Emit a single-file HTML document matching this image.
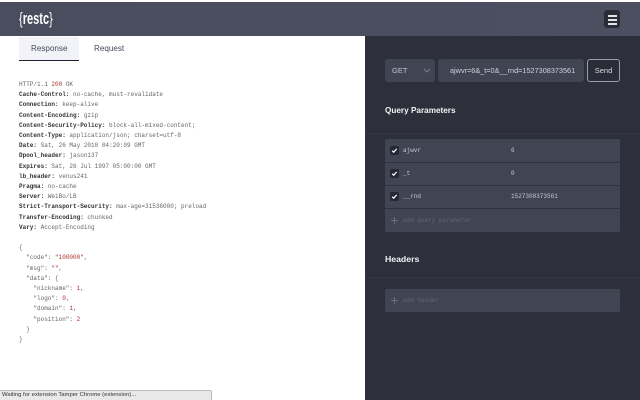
<!DOCTYPE html>
<html><head><meta charset="utf-8">
<style>
html,body{margin:0;padding:0;width:640px;height:400px;overflow:hidden;background:#fff}
body{position:relative;font-family:"Liberation Sans",sans-serif}
.a{position:absolute;white-space:pre}
.m{font-family:"Liberation Mono",monospace}
#hdr{left:0;top:2px;width:640px;height:34px;background:linear-gradient(90deg,#494d5e,#4b4f60)}
#side{left:365px;top:36px;width:275px;height:364px;background:#2d2f3b}
#code{left:19px;top:80px;font-size:6px;line-height:10.2px;color:#666}
#code b{color:#333;font-weight:bold}
#code i{font-style:normal;color:#a33}
.box{background:#414553}
.sep{background:#2f323e;height:1px;left:385px;width:235px}
.cb{width:9px;height:9px;background:#262833;border-radius:2px;left:390px}
.v{font-size:6px;color:#c5c8d0;line-height:10px}
.h{font-weight:bold;color:#f2f2f4;line-height:12px}
</style></head><body>
<div class="a" id="hdr"></div>
<div class="a" style="left:19px;top:8px;font-size:17px;line-height:22px;color:#fff;font-weight:bold;transform-origin:0 50%;transform:scaleX(.65)"><span style="font-weight:normal">{</span>restc<span style="font-weight:normal">}</span></div>
<div class="a" style="left:604px;top:10px;width:16px;height:18px;background:#2a2c37;border-radius:3px"></div>
<div class="a" style="left:608px;top:15px;width:9px;height:1.6px;background:#e4e4e8"></div>
<div class="a" style="left:608px;top:19px;width:9px;height:1.6px;background:#e4e4e8"></div>
<div class="a" style="left:608px;top:23px;width:9px;height:1.6px;background:#e4e4e8"></div>

<div class="a" style="left:19px;top:37px;width:60px;height:23px;background:#f2f3f8"></div>
<div class="a" style="left:19px;top:60px;width:60px;height:1px;background:#1f2130"></div>
<div class="a" style="left:0;top:60px;width:365px;height:1px;background:#eceef2;z-index:-1"></div>
<div class="a" style="left:31px;top:43px;font-size:8.1px;line-height:12px;color:#444a5c">Response</div>
<div class="a" style="left:94px;top:43px;font-size:8.1px;line-height:12px;color:#444a5c">Request</div>

<div class="a m" id="code">HTTP/1.1 <i>200</i> OK
<b>Cache-Control:</b> no-cache, must-revalidate
<b>Connection:</b> keep-alive
<b>Content-Encoding:</b> gzip
<b>Content-Security-Policy:</b> block-all-mixed-content;
<b>Content-Type:</b> application/json; charset=utf-8
<b>Date:</b> Sat, 26 May 2018 04:20:09 GMT
<b>Dpool_header:</b> jason137
<b>Expires:</b> Sat, 26 Jul 1997 05:00:00 GMT
<b>lb_header:</b> venus241
<b>Pragma:</b> no-cache
<b>Server:</b> WeiBo/LB
<b>Strict-Transport-Security:</b> max-age=31536000; preload
<b>Transfer-Encoding:</b> chunked
<b>Vary:</b> Accept-Encoding

{
  "code": <i>"100000"</i>,
  "msg": <i>""</i>,
  "data": {
    "nickname": <i>1</i>,
    "logo": <i>0</i>,
    "domain": <i>1</i>,
    "position": <i>2</i>
  }
}</div>

<div class="a" style="left:0;top:390px;width:212px;height:10px;background:#e9e9e9;border:1px solid #bbb;border-bottom:0;border-left:0;box-sizing:border-box;border-radius:0 2px 0 0"></div>
<div class="a" style="left:2px;top:391px;font-size:5.9px;line-height:9px;color:#333">Waiting for extension Tamper Chrome (extension)...</div>

<div class="a" id="side"></div>
<div class="a box" style="left:385px;top:59px;width:50px;height:23px;border-radius:3px"></div>
<div class="a" style="left:392px;top:65px;font-size:7.5px;line-height:11px;color:#c3c6ce">GET</div>
<svg class="a" style="left:423px;top:68px" width="8" height="5" viewBox="0 0 8 5"><path d="M1 1l3 3 3-3" fill="none" stroke="#8d91a0" stroke-width=".8"/></svg>
<div class="a box" style="left:438px;top:59px;width:146px;height:23px;border-radius:3px"></div>
<div class="a" style="left:450px;top:65px;width:132px;overflow:hidden;font-size:7.3px;line-height:11px;color:#d0d2d9">ajwvr=6&amp;_t=0&amp;__rnd=1527308373561</div>
<div class="a" style="left:587px;top:59px;width:33px;height:23px;box-sizing:border-box;border:1px solid #9a9dab;border-radius:3px;background:#2a2c37;color:#dcdde2;font-size:7.5px;line-height:21px;text-align:center">Send</div>

<div class="a h" style="left:385px;top:105px;font-size:8.2px">Query Parameters</div>
<div class="a" style="left:365px;top:133px;width:275px;height:1px;background:#363945"></div>

<div class="a box" style="left:385px;top:139px;width:235px;height:93px;border-radius:2px"></div>
<div class="a sep" style="top:162px"></div>
<div class="a sep" style="top:185px"></div>
<div class="a sep" style="top:208px"></div>

<div class="a cb" style="top:146px"></div>
<div class="a cb" style="top:169px"></div>
<div class="a cb" style="top:192px"></div>
<svg class="a" style="left:390px;top:146px" width="9" height="9" viewBox="0 0 9 9"><path d="M2.2 4.7l1.5 1.5 3-3.3" fill="none" stroke="#fff" stroke-width="1.2"/></svg>
<svg class="a" style="left:390px;top:169px" width="9" height="9" viewBox="0 0 9 9"><path d="M2.2 4.7l1.5 1.5 3-3.3" fill="none" stroke="#fff" stroke-width="1.2"/></svg>
<svg class="a" style="left:390px;top:192px" width="9" height="9" viewBox="0 0 9 9"><path d="M2.2 4.7l1.5 1.5 3-3.3" fill="none" stroke="#fff" stroke-width="1.2"/></svg>

<div class="a m v" style="left:403px;top:146px">ajwvr</div>
<div class="a m v" style="left:403px;top:169px">_t</div>
<div class="a m v" style="left:403px;top:192px">__rnd</div>
<div class="a m v" style="left:511px;top:146px">6</div>
<div class="a m v" style="left:511px;top:169px">0</div>
<div class="a m v" style="left:511px;top:192px">1527308373561</div>

<svg class="a" style="left:390px;top:216px" width="9" height="9" viewBox="0 0 9 9"><path d="M4.5 1v7M1 4.5h7" stroke="#6a6e7c" stroke-width="1"/></svg>
<div class="a m v" style="left:403px;top:216px;color:#626673">add query parameter</div>

<div class="a h" style="left:385px;top:253px;font-size:8.7px">Headers</div>
<div class="a" style="left:365px;top:277px;width:275px;height:1px;background:#363945"></div>
<div class="a box" style="left:385px;top:289px;width:235px;height:23px;border-radius:2px"></div>
<svg class="a" style="left:390px;top:296px" width="9" height="9" viewBox="0 0 9 9"><path d="M4.5 1v7M1 4.5h7" stroke="#6a6e7c" stroke-width="1"/></svg>
<div class="a m v" style="left:403px;top:296px;color:#626673">add header</div>
</body></html>
